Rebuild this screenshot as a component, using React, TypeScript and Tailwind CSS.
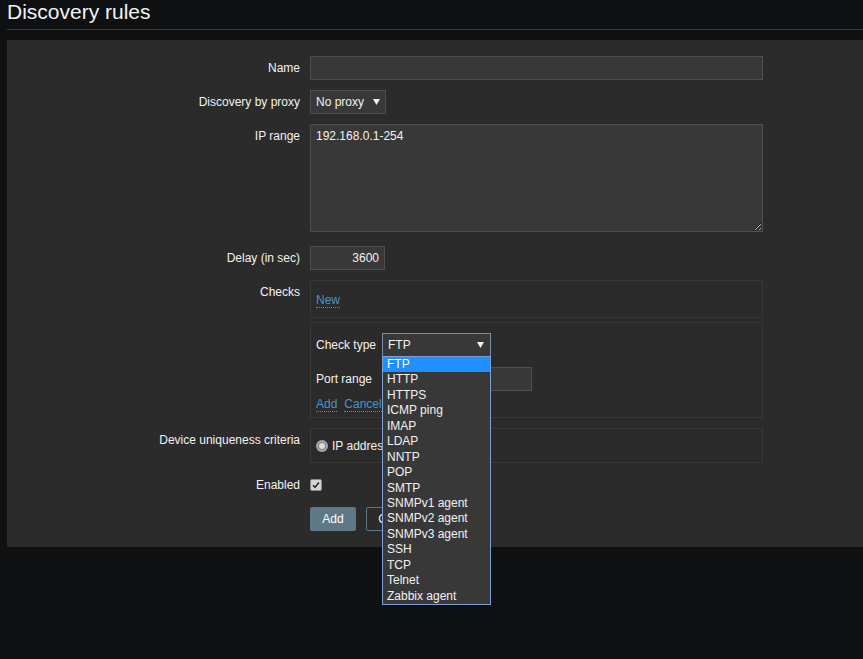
import type { ReactNode } from 'react';

const CHECK_TYPES = [
  'FTP', 'HTTP', 'HTTPS', 'ICMP ping', 'IMAP', 'LDAP', 'NNTP', 'POP', 'SMTP',
  'SNMPv1 agent', 'SNMPv2 agent', 'SNMPv3 agent', 'SSH', 'TCP', 'Telnet', 'Zabbix agent',
];

function Caret() {
  return (
    <svg width="7" height="6" viewBox="0 0 7 6" className="shrink-0">
      <path d="M0 0h7L3.5 6z" fill="#f2f2f2" />
    </svg>
  );
}

function Row({ label, children, className = '' }: { label: string; children: ReactNode; className?: string }) {
  return (
    <div className={`flex ${className}`}>
      <div className="w-[293px] text-right leading-[24px] shrink-0">{label}</div>
      <div className="ml-[10px] w-[453px]">{children}</div>
    </div>
  );
}

function Link({ children }: { children: ReactNode }) {
  return (
    <span className="text-[#4796c4] border-b border-dotted border-[#4796c4] leading-[13px] inline-block">
      {children}
    </span>
  );
}

export default function App() {
  return (
    <div className="min-h-screen bg-[#0f1012] text-[#f2f2f2] text-[12px] font-['Liberation_Sans',Arial,sans-serif]">
      <header className="ml-[7px] h-[30px] border-b border-[#383838]">
        <h1 className="text-[21px] leading-[24px] text-[#f2f2f2]">Discovery rules</h1>
      </header>

      <main className="ml-[7px] mt-[10px] bg-[#2b2b2b] pt-[16px] pb-[16px]">
        <Row label="Name">
          <div className="h-[24px] border border-[#4f4f4f] bg-[#383838]" />
        </Row>

        <Row label="Discovery by proxy" className="mt-[10px]">
          <div className="w-[76px] h-[24px] border border-[#4f4f4f] bg-[#383838] flex items-center justify-between px-[5px]">
            <span>No proxy</span>
            <Caret />
          </div>
        </Row>

        <Row label="IP range" className="mt-[10px]">
          <textarea
            readOnly
            value="192.168.0.1-254"
            className="block w-[453px] h-[108px] border border-[#4f4f4f] bg-[#383838] px-[5px] py-[4px] leading-[14px] text-[12px] text-[#f2f2f2] outline-none"
          />
        </Row>

        <Row label="Delay (in sec)" className="mt-[14px]">
          <div className="w-[75px] h-[24px] border border-[#4f4f4f] bg-[#383838] text-right px-[5px] leading-[22px]">
            3600
          </div>
        </Row>

        <Row label="Checks" className="mt-[10px]">
          <div className="border border-[#383838] px-[5px] pt-[10px] h-[38px]">
            <Link>New</Link>
          </div>

          <div className="mt-[4px] border border-[#383838] px-[5px] pt-[10px] pb-[5px] h-[96px]">
            <div className="flex items-center">
              <span className="w-[66px]">Check type</span>
              <div className="relative">
                <div className="w-[109px] h-[24px] border border-[#7a8ea3] bg-[#383838] flex items-center justify-between pl-[5px] pr-[6px]">
                  <span>FTP</span>
                  <Caret />
                </div>
                <ul className="absolute left-0 top-[23px] z-10 w-[109px] border border-[#7d9fd6] bg-[#383838]">
                  {CHECK_TYPES.map((t, i) => (
                    <li
                      key={t}
                      className={`h-[15.45px] leading-[15.45px] pl-[4px] whitespace-nowrap ${
                        i === 0 ? 'bg-[#1e90ff] text-white' : 'text-[#f2f2f2]'
                      }`}
                    >
                      {t}
                    </li>
                  ))}
                </ul>
              </div>
            </div>
            <div className="flex items-center mt-[10px]">
              <span className="w-[66px]">Port range</span>
              <div className="w-[150px] h-[24px] border border-[#4f4f4f] bg-[#383838]" />
            </div>
            <div className="mt-[7px] flex gap-[7px] leading-[14px]">
              <Link>Add</Link>
              <Link>Cancel</Link>
            </div>
          </div>
        </Row>

        <Row label="Device uniqueness criteria" className="mt-[10px]">
          <div className="border border-[#383838] p-[5px] h-[35px] flex items-center">
            <span className="w-[12px] h-[12px] rounded-full bg-[#a8a8a8] flex items-center justify-center">
              <span className="w-[6px] h-[6px] rounded-full bg-[#dcdcdc] ring-1 ring-[#808080]" />
            </span>
            <span className="ml-[4px]">IP address</span>
          </div>
        </Row>

        <Row label="Enabled" className="mt-[10px]">
          <div className="h-[24px] flex items-center">
            <span className="w-[12px] h-[12px] rounded-[2px] bg-[#d4d4d4] border border-[#8a8a8a] flex items-center justify-center">
              <svg width="8" height="8" viewBox="0 0 8 8">
                <path d="M1 4.2l2 2L7 1.5" fill="none" stroke="#2b2b2b" strokeWidth="1.6" />
              </svg>
            </span>
          </div>
        </Row>

        <div className="flex mt-[10px]">
          <div className="w-[293px] shrink-0" />
          <div className="ml-[10px] flex gap-[10px]">
            <button className="w-[46px] h-[24px] rounded-[2px] bg-[#5f7886] text-white text-[12px]">Add</button>
            <button className="w-[62px] h-[24px] rounded-[2px] border border-[#5f7886] text-[#f2f2f2] text-[12px]">Cancel</button>
          </div>
        </div>
      </main>
    </div>
  );
}
